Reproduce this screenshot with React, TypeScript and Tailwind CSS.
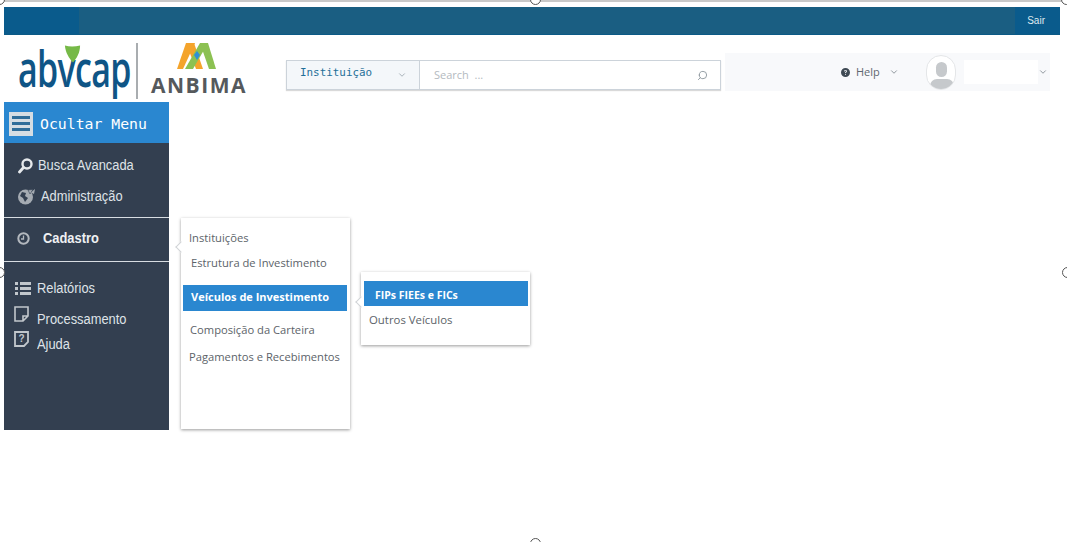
import { ChevronDown, Search } from "lucide-react";
import { FaCircleQuestion } from "react-icons/fa6";

const sans = "font-['Liberation_Sans',Arial,sans-serif]";
const open = "font-['Open_Sans','Noto_Sans',sans-serif]";
const mono = "font-['DejaVu_Sans_Mono',monospace]";

function Handle({ className }: { className: string }) {
  return <span className={`absolute w-[11px] h-[11px] rounded-full border border-[#555] bg-white ${className}`} />;
}

function Logos() {
  return (
    <div className="flex items-start w-[281px] shrink-0">
      <div className="relative w-[116px] h-[67px] ml-[15px]">
        <span className="absolute left-[-1px] top-[3px] text-[50px] leading-[60px] text-[#0f5586] tracking-[-1px] origin-left scale-x-[0.68] whitespace-nowrap font-['Open_Sans',sans-serif] font-semibold">
          abvcap
        </span>
        <svg className="absolute left-[45px] top-[10px]" width="17" height="18" viewBox="0 0 17 19">
          <path d="M0.5 0.5 C5 2 11 2 16.5 0.5 C16.5 8 13 14 9 18.5 C5 14 1 8 0.5 0.5 Z" fill="#76b947" />
        </svg>
      </div>
      <div className="w-[2px] h-[56px] mt-[8px] ml-[1px] bg-[#a9adb0]" />
      <div className="flex flex-col items-center ml-[13px] mt-[8px] w-[96px]">
        <svg width="40" height="27" viewBox="0 0 40 27" className="-ml-[4px]">
          <path d="M9 0 L18 0 L6 26 L0 26 Z" fill="#f4a42c" />
          <path d="M9 0 L17 0 L26 26 L19 26 Z" fill="#f4a42c" />
          <path d="M23 0 L31 0 L39 26 L32 26 Z" fill="#8cc152" />
          <path d="M23 0 L31 0 L16 26 L8 26 Z" fill="#8cc152" />
          <path d="M20 8 L23 12 L20 17 L17 12 Z" fill="#2f8fd8" />
        </svg>
        <span className={`${open} text-[21px] leading-[26px] font-bold text-[#55595c] tracking-[1.5px] mt-[2px]`}>ANBIMA</span>
      </div>
    </div>
  );
}

function SearchBar() {
  return (
    <div className="flex h-[30px] w-[435px] mt-[25px] ml-[1px] border border-[#ccd3da] shadow-[0_1px_1px_rgba(0,0,0,0.15)] bg-white">
      <div className="flex items-center w-[133px] bg-[#f4f7fa] border-r border-[#ccd3da] pl-[13px] pr-[12px] pb-[3px]">
        <span className={`${mono} text-[10.9px] text-[#1f6f99]`}>Instituição</span>
        <ChevronDown className="ml-auto mt-[3px] text-[#9aa5ad]" size={10} />
      </div>
      <div className="flex items-center flex-1 pl-[14px] pr-[12px]">
        <span className={`${open} text-[11px] text-[#b4bac0] whitespace-pre`}>Search  ...</span>
        <Search className="ml-auto text-[#8d979e] -scale-x-100" size={11} />
      </div>
    </div>
  );
}

function UserArea() {
  return (
    <div className="flex items-center h-[38px] w-[325px] mt-[18px] ml-[4px] bg-[#f8f9fb]">
      <FaCircleQuestion className="ml-[116px] text-[#3f4a54]" size={9} />
      <span className={`${open} text-[11px] text-[#5f6870] ml-[6px]`}>Help</span>
      <ChevronDown className="ml-[9px] text-[#7d868d]" size={10} />
      <div className="relative ml-[27px] w-[30px] h-[35px] rounded-full border border-[#e4e6e8] bg-white overflow-hidden">
        <div className="absolute left-[9px] top-[6px] w-[11px] h-[15px] rounded-full bg-[#c6c9cc]" />
        <div className="absolute left-[3px] top-[23px] w-[24px] h-[14px] rounded-full bg-[#c6c9cc]" />
      </div>
      <div className="w-[74px] h-[24px] ml-[8px] bg-white" />
      <ChevronDown className="text-[#7d868d]" size={10} />
    </div>
  );
}

function Sidebar() {
  const itemClass = `${sans} text-[14px] text-[#dfe3e8] scale-x-[0.92] origin-left whitespace-nowrap`;
  return (
    <aside className="flex flex-col w-[165px] h-[328px] bg-[#333f50]">
      <div className="flex items-center h-[41px] bg-[#2a87d0] pl-[5px]">
        <div className="flex flex-col justify-center gap-[3px] w-[24px] h-[24px] mt-[2px] px-[3px] bg-[#d5dde3]">
          <span className="h-[3px] bg-[#2f6d99]" />
          <span className="h-[3px] bg-[#2f6d99]" />
          <span className="h-[3px] bg-[#2f6d99]" />
        </div>
        <span className={`${mono} text-[14.8px] text-white ml-[7px] mt-[3px]`}>Ocultar Menu</span>
      </div>
      <div className="flex flex-col h-[75px] border-b border-[#d8dde2]">
        <div className="flex items-center h-[17px] mt-[14px] pl-[14px]">
          <svg width="15" height="16" viewBox="0 0 15 16" className="text-[#e6e9ec]">
            <circle cx="9" cy="6" r="4.5" fill="none" stroke="currentColor" strokeWidth="2.4" />
            <path d="M5.5 9.5 L1.5 14" stroke="currentColor" strokeWidth="2.8" strokeLinecap="round" />
          </svg>
          <span className={`${itemClass} ml-[5px]`}>Busca Avancada</span>
        </div>
        <div className="flex items-center h-[18px] mt-[13px] pl-[13px]">
          <svg width="19" height="17" viewBox="0 0 19 17">
            <circle cx="8.5" cy="9" r="7.5" fill="#a5abb2" />
            <path d="M5 4 L9 5 L8 8 L11 10 L8 14 L6 10 L3 8 Z" fill="#333f50" />
            <path d="M13 5 L18 1 L17 6 L15 5 Z" fill="#a5abb2" />
            <path d="M11 2 L16 1.5 L13 6 Z" fill="#a5abb2" stroke="#333f50" strokeWidth="0.6" />
          </svg>
          <span className={`${itemClass} ml-[5px]`}>Administração</span>
        </div>
      </div>
      <div className="flex items-center h-[44px] border-b border-[#d8dde2] pl-[13px] pb-[3px]">
        <svg width="13" height="13" viewBox="0 0 13 13" className="text-[#b3b8be]">
          <circle cx="6.5" cy="6.5" r="5.2" fill="none" stroke="currentColor" strokeWidth="2" />
          <path d="M6.5 3.5 V7 H4" fill="none" stroke="currentColor" strokeWidth="1.3" />
        </svg>
        <span className={`${sans} text-[14px] font-bold text-[#eef0f2] ml-[13px] scale-x-[0.92] origin-left whitespace-nowrap`}>Cadastro</span>
      </div>
      <div className="flex items-center h-[18px] mt-[17px] pl-[11px]">
        <svg width="16" height="15" viewBox="0 0 16 15" className="text-[#c2c7cc]">
          <path d="M0 1 H3 V4 H0 Z M0 6 H3 V9 H0 Z M0 11 H3 V14 H0 Z M5 1 H16 V4 H5 Z M5 6 H16 V9 H5 Z M5 11 H16 V14 H5 Z" fill="currentColor" />
        </svg>
        <span className={`${itemClass} ml-[6px]`}>Relatórios</span>
      </div>
      <div className="flex items-start h-[18px] mt-[12px] pl-[10px]">
        <svg width="15" height="16" viewBox="0 0 15 16" className="text-[#c2c7cc] -mt-[3px]">
          <path d="M1 1 H14 V10 L9 15 H1 Z M14 10 H9 V15" fill="none" stroke="currentColor" strokeWidth="1.6" />
        </svg>
        <span className={`${itemClass} ml-[8px]`}>Processamento</span>
      </div>
      <div className="flex items-start h-[18px] mt-[7px] pl-[10px]">
        <svg width="15" height="16" viewBox="0 0 15 16" className="text-[#c2c7cc] -mt-[3px]">
          <path d="M1 1 H14 V11 L10 15 H1 Z" fill="none" stroke="currentColor" strokeWidth="1.8" />
          <text x="7.5" y="10.5" fontSize="10" fontWeight="700" textAnchor="middle" fill="currentColor" fontFamily="Liberation Sans">?</text>
        </svg>
        <span className={`${itemClass} ml-[8px]`}>Ajuda</span>
      </div>
    </aside>
  );
}

function Arrow({ className }: { className: string }) {
  return (
    <span className={`absolute w-[8px] h-[8px] rotate-45 bg-white border-l border-b border-[#d0d3d6] ${className}`} />
  );
}

function CadastroMenu() {
  const item = `${open} text-[11.2px] leading-[16px] text-[#5c6369] whitespace-nowrap`;
  return (
    <div className="absolute left-[181px] top-[218px] w-[169px] h-[211px] bg-white shadow-[0_1px_3px_rgba(0,0,0,0.4)]">
      <Arrow className="-left-[4px] top-[25px]" />
      <div className={`${item} pl-[8px] pt-[12px]`}>Instituições</div>
      <div className={`${item} pl-[10px] mt-[9px]`}>Estrutura de Investimento</div>
      <div className={`${open} flex items-center h-[26px] ml-[2px] mr-[3px] mt-[14px] pl-[8px] pb-[1px] bg-[#2a87d0] text-[11px] font-bold text-white whitespace-nowrap`}>
        Veículos de Investimento
      </div>
      <div className={`${item} pl-[9px] mt-[11px]`}>Composição da Carteira</div>
      <div className={`${item} pl-[8px] mt-[11px]`}>Pagamentos e Recebimentos</div>
    </div>
  );
}

function VeiculosMenu() {
  return (
    <div className="absolute left-[361px] top-[272px] w-[169px] h-[73px] bg-white shadow-[0_1px_3px_rgba(0,0,0,0.4)]">
      <Arrow className="-left-[4px] top-[26px]" />
      <div className={`${open} relative flex items-center h-[25px] ml-[3px] mr-[2px] mt-[9px] pl-[11px] pt-[5px] bg-[#2a87d0] text-[10.5px] font-bold text-white`}>
        FIPs FIEEs e FICs
      </div>
      <div className={`${open} text-[11.4px] leading-[16px] text-[#5c6369] pl-[8px] mt-[6px]`}>Outros Veículos</div>
    </div>
  );
}

export default function App() {
  return (
    <div className="relative w-[1067px] h-[542px] overflow-hidden bg-white pt-[7px] pl-[4px]">
      <div className="flex w-[1056px] h-[28px] bg-[#1a5e82] border-b border-[#0c5a86]">
        <div className="w-[75px] bg-[#0a5b8c]" />
        <div className="flex-1" />
        <div className={`${sans} flex items-center justify-end w-[45px] pr-[15px] bg-[#0a5b8c] text-[10px] text-[#dfe9ef]`}>Sair</div>
      </div>
      <header className="flex h-[67px]">
        <Logos />
        <SearchBar />
        <UserArea />
      </header>
      <Sidebar />
      <CadastroMenu />
      <VeiculosMenu />
      <div className="absolute left-0 top-0 w-full h-[2px] bg-[#c9c9c9]" />
      <Handle className="-left-[6px] -top-[6px]" />
      <Handle className="left-[530px] -top-[6px]" />
      <Handle className="-right-[5px] -top-[6px]" />
      <Handle className="-left-[6px] top-[267px]" />
      <Handle className="-right-[6px] top-[267px]" />
      <Handle className="left-[530px] top-[538px]" />
    </div>
  );
}
